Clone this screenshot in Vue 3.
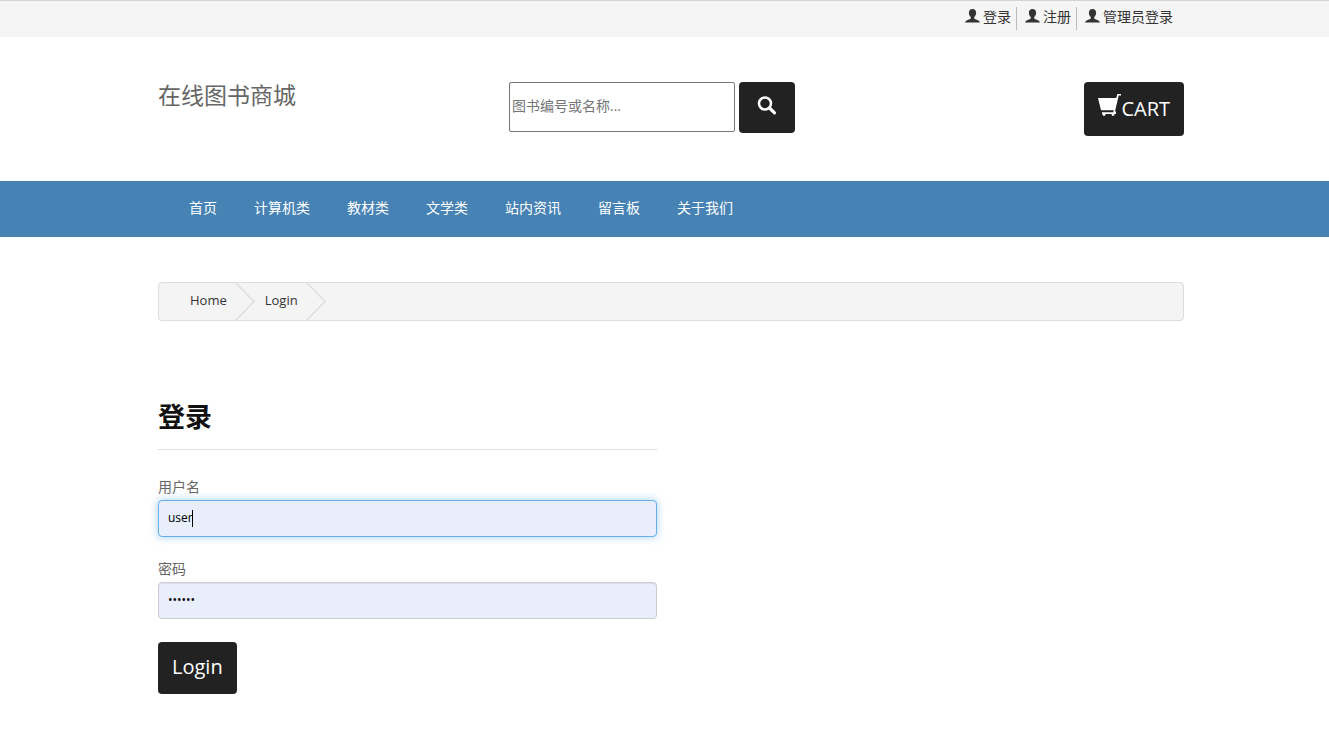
<script setup>
import { ref } from 'vue'

const userLinks = ['登录', '注册', '管理员登录']
const categories = ['首页', '计算机类', '教材类', '文学类', '站内资讯', '留言板', '关于我们']
const crumbs = ['Home', 'Login']
const keyword = ref('')
const username = ref('user')
const password = ref('123456')
</script>

<template>
  <div class="page">
    <div class="topbar">
      <nav class="wrap toplinks" aria-label="账户">
        <a v-for="label in userLinks" :key="label" href="#">
          <svg width="15" height="14" viewBox="0 0 15 14" aria-hidden="true">
            <path d="M7.500 0C5.200 0 3.900 1.500 3.900 3.700c0 1.800.7 3.400 1.900 4.300v1.400c-.3.500-1.600.9-3 1.500C1 11.600.4 11.900.2 13.400h14.600c-.2-1.500-.8-1.800-2.600-2.500-1.400-.6-2.700-1-3-1.500V8c1.200-.9 1.900-2.500 1.900-4.300C11.100 1.500 9.800 0 7.500 0z" />
          </svg>
          <span>{{ label }}</span>
        </a>
      </nav>
    </div>

    <header class="wrap header">
      <a class="brand" href="#">在线图书商城</a>
      <form class="search" @submit.prevent>
        <input v-model="keyword" type="text" placeholder="图书编号或名称..." aria-label="图书编号或名称" />
        <button type="submit" class="btn search-btn" aria-label="搜索">
          <svg width="20" height="20" viewBox="0 0 20 20" aria-hidden="true">
            <circle cx="8" cy="7.500" r="6" fill="none" stroke="#fff" stroke-width="2.500" />
            <path d="M12.500 12l5 4.800" stroke="#fff" stroke-width="3.200" stroke-linecap="round" />
          </svg>
        </button>
      </form>
      <button type="button" class="btn cart-btn">
        <svg width="23" height="24" viewBox="0 0 23 24" aria-hidden="true">
          <path d="M0 4h18.200l1.200-4H23v1.600h-2.300L17 17.500h1v2.500h-1.500c0 1.200-.6 2-1.500 2s-1.500-.8-1.500-2H7.500c0 1.200-.6 2-1.500 2s-1.500-.8-1.500-2H4v-1.700h11.300l.4-2H3z" fill="#fff" />
        </svg>
        <span>CART</span>
      </button>
    </header>

    <nav class="menu" aria-label="分类">
      <ul class="wrap">
        <li v-for="item in categories" :key="item"><a href="#">{{ item }}</a></li>
      </ul>
    </nav>

    <main class="wrap">
      <nav class="crumbs" aria-label="Breadcrumb">
        <a v-for="crumb in crumbs" :key="crumb" href="#">
          <span>{{ crumb }}</span>
          <svg width="20" height="37" viewBox="0 0 20 37" aria-hidden="true">
            <path d="M0-1L19 18.500 0 38" fill="none" stroke="#ddd" stroke-width="1.500" />
          </svg>
        </a>
      </nav>

      <form class="login" @submit.prevent>
        <h1>登录</h1>
        <label for="username">用户名</label>
        <div class="field active">
          <input id="username" v-model="username" type="text" />
          <span class="caret" aria-hidden="true"></span>
        </div>
        <label for="password">密码</label>
        <div class="field">
          <input id="password" v-model="password" type="password" />
        </div>
        <button type="submit" class="btn login-btn">Login</button>
      </form>
    </main>
  </div>
</template>

<style>
body {
  margin: 0;
  background: #fff;
}
</style>

<style scoped>
.page {
  font-family: "Open Sans", "Noto Sans CJK SC", sans-serif;
  font-size: 14px;
  line-height: 20px;
  color: #666;
}
.page * {
  box-sizing: border-box;
}
a {
  color: #333;
  text-decoration: none;
}
input,
button {
  font-family: inherit;
}
.wrap {
  padding: 0 145px 0 158px;
}
.topbar {
  border-top: 1px solid #d4d4d4;
  background: #f5f5f5;
  height: 37px;
}
.toplinks {
  display: flex;
  justify-content: flex-end;
  padding-top: 6px;
  padding-right: 151px;
}
.toplinks a {
  display: flex;
  gap: 3px;
  height: 23px;
  padding: 0 5px 0 8px;
  border-right: 1px solid #bbb;
}
.toplinks a:last-child {
  border-right: 0;
}
.toplinks svg {
  margin-top: 2px;
  fill: #333;
}
.header {
  display: grid;
  grid-template-columns: 351px 1fr auto;
  align-items: start;
  padding-top: 45px;
  padding-bottom: 45px;
}
.brand {
  color: #666;
  font-size: 23px;
  line-height: 27px;
}
.btn {
  display: flex;
  align-items: center;
  justify-content: center;
  border: 0;
  border-radius: 4px;
  background: #222;
  color: #fff;
  font-size: 20px;
  font-weight: 500;
}
.search {
  display: flex;
  gap: 4px;
}
.search input {
  width: 226px;
  height: 50px;
  padding: 0 2px 3px;
  border: 1px solid #767676;
  border-radius: 2px;
  font-size: 14px;
}
.search input::placeholder {
  color: #757575;
}
.search-btn {
  width: 56px;
  height: 51px;
  padding: 0 0 4px;
}
.cart-btn {
  height: 54px;
  padding: 0 14px 2px;
}
.cart-btn svg {
  margin-bottom: 4px;
}
.menu {
  background: #4682b4;
}
.menu ul {
  display: flex;
  gap: 37px;
  margin: 0;
  padding-left: 189px;
  list-style: none;
}
.menu a {
  display: block;
  padding: 17px 0 19px;
  color: #fff;
}
.crumbs {
  display: flex;
  height: 39px;
  margin-top: 45px;
  padding-left: 31px;
  border: 1px solid #ddd;
  border-radius: 4px;
  background: #f4f4f4;
  font-size: 13px;
  line-height: 35px;
}
.crumbs a {
  display: flex;
  gap: 8px;
  margin-right: 10px;
}
.login {
  max-width: 499px;
  padding-top: 78px;
}
h1 {
  margin: 0 0 27px;
  padding-bottom: 14px;
  border-bottom: 1px solid #ddd;
  color: #111;
  font-size: 27px;
  line-height: 36px;
}
label {
  display: block;
  height: 23px;
}
.field {
  position: relative;
  margin-bottom: 22px;
}
.field input {
  display: block;
  width: 100%;
  height: 37px;
  padding: 0 9px 2px;
  border: 1px solid #ccc;
  border-radius: 4px;
  outline: 0;
  background: #e8eefc;
  box-shadow: inset 0 1px 1px rgba(0, 0, 0, 0.075);
  color: #000;
  font-size: 12px;
}
.field.active input {
  border-color: #66afe9;
  box-shadow: 0 0 8px rgba(102, 175, 233, 0.6);
}
.caret {
  position: absolute;
  top: 10px;
  left: 34px;
  width: 1px;
  height: 17px;
  background: #000;
}
.login-btn {
  height: 52px;
  margin-top: 23px;
  padding: 0 14px 3px;
}
</style>
